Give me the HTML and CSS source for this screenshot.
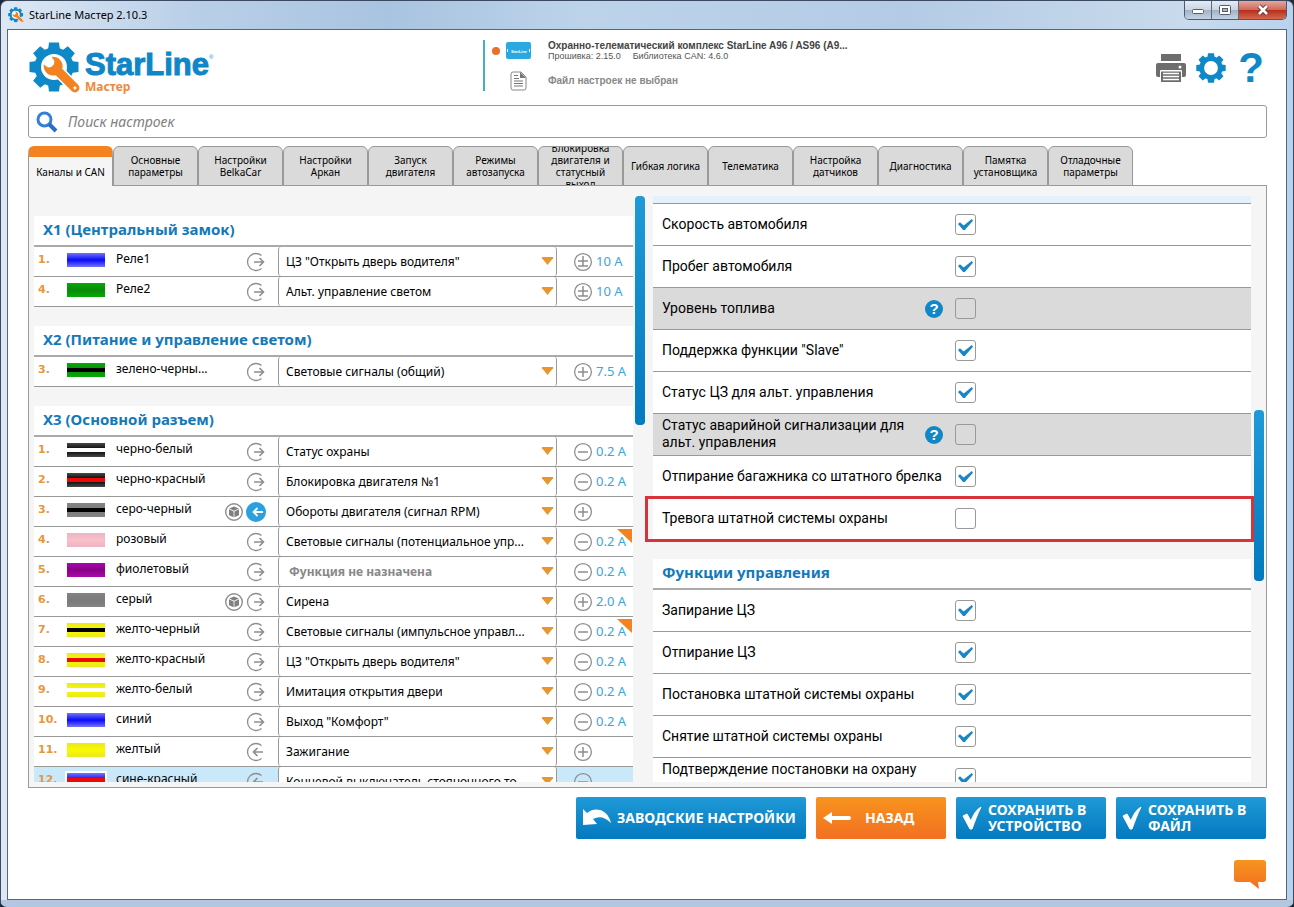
FILE: index.html
```html
<!DOCTYPE html>
<html lang="ru">
<head>
<meta charset="utf-8">
<title>StarLine Мастер 2.10.3</title>
<link rel="stylesheet" href="styles.css">
</head>
<body>
<svg class="defs" aria-hidden="true">
  <defs>
    <linearGradient id="orange" x1="0" y1="0" x2="0" y2="1"><stop offset="0" stop-color="#f7941e"/><stop offset="1" stop-color="#f36f21"/></linearGradient>
  </defs>
  <symbol id="gear" viewBox="-25 -25 50 50">
    <circle r="15.5" fill="none" stroke="#0f88c8" stroke-width="8"/>
    <g fill="#0f88c8">
      <path id="tooth" d="M-6-17-5-24.5H5L6-17z"/>
      <use href="#tooth" transform="rotate(45)"/><use href="#tooth" transform="rotate(90)"/>
      <use href="#tooth" transform="rotate(135)"/><use href="#tooth" transform="rotate(180)"/>
      <use href="#tooth" transform="rotate(225)"/><use href="#tooth" transform="rotate(270)"/>
      <use href="#tooth" transform="rotate(315)"/>
    </g>
  </symbol>
  <symbol id="logo" viewBox="-25 -25 52 52">
    <use href="#gear" x="-25" y="-25" width="50" height="50"/>
    <circle r="13" fill="#fff"/>
    <g transform="translate(-1 -1) rotate(45)">
      <path d="M5-4.5H31a4.500 4.500 0 0 1 0 9H5z" fill="#f58220" stroke="#fff" stroke-width="3"/>
      <path d="M-7.500-5.500A9.500 9.500 0 0 1 8.500-4.500H31a4.500 4.500 0 0 1 0 9H8.500A9.500 9.500 0 0 1-7.500 5.500L-2.500 4.500-.5 2V-2L-2.500-4.500z" fill="#f58220"/>
      <circle cx="31" cy="0" r="1.500" fill="#fff"/>
    </g>
  </symbol>
  <symbol id="out" viewBox="0 0 20 20">
    <path d="M15.500 3.500A8.500 8.500 0 1 0 15.500 16.500" fill="none" stroke="#8e8e8e" stroke-width="1.300"/>
    <path d="M8 10h9M13.500 6l4 4-4 4" fill="none" stroke="#8e8e8e" stroke-width="1.600"/>
  </symbol>
  <symbol id="in" viewBox="0 0 20 20">
    <path d="M15.500 3.500A8.500 8.500 0 1 0 15.500 16.500" fill="none" stroke="#8e8e8e" stroke-width="1.300"/>
    <path d="M17 10H8M11.500 6l-4 4 4 4" fill="none" stroke="#8e8e8e" stroke-width="1.600"/>
  </symbol>
  <symbol id="in-on" viewBox="0 0 20 20">
    <circle cx="10" cy="10" r="10" fill="#2ba0df"/>
    <path d="M17 10H8M11.500 6l-4 4 4 4" fill="none" stroke="#fff" stroke-width="1.800"/>
  </symbol>
  <symbol id="cube" viewBox="0 0 20 20">
    <circle cx="10" cy="10" r="8.300" fill="none" stroke="#8e8e8e" stroke-width="1.400"/>
    <path d="M10 4.500l4.800 2L10 8.700 5.200 6.500zM5 7.300l4.600 2.100v5.900L5 13.200zM15 7.300l-4.600 2.100v5.900l4.600-2.100z" fill="#808080"/>
  </symbol>
  <symbol id="minus" viewBox="0 0 20 20">
    <circle cx="10" cy="10" r="8.400" fill="none" stroke="#8e8e8e" stroke-width="1.300"/>
    <path d="M5 10h10" stroke="#8e8e8e" stroke-width="1.500"/>
  </symbol>
  <symbol id="plus" viewBox="0 0 20 20">
    <circle cx="10" cy="10" r="8.400" fill="none" stroke="#8e8e8e" stroke-width="1.300"/>
    <path d="M5 10h10M10 5v10" stroke="#8e8e8e" stroke-width="1.500"/>
  </symbol>
  <symbol id="plusminus" viewBox="0 0 20 20">
    <circle cx="10" cy="10" r="8.400" fill="none" stroke="#8e8e8e" stroke-width="1.300"/>
    <path d="M5 9h10M10 4v10M5 14h10" stroke="#8e8e8e" stroke-width="1.500"/>
  </symbol>
  <symbol id="tick" viewBox="0 0 20 24">
    <path d="M1 10l4-2 4 7C11 9 14 4 19 1 15 9 13 15 10 23H8z" fill="#fff" stroke="#fff" stroke-linejoin="round"/>
  </symbol>
</svg>

<div class="window">
  <header class="titlebar">
    <svg class="app-icon"><use href="#logo"/></svg>
    <h1 class="title">StarLine Мастер 2.10.3</h1>
    <div class="win-buttons">
      <button class="win-btn" aria-label="Свернуть"><svg width="14" height="10" viewBox="0 0 14 10"><rect x="1.500" y="4.500" width="11" height="4" rx="1" fill="#fff" stroke="#555d6b"/></svg></button>
      <button class="win-btn" aria-label="Развернуть"><svg width="14" height="12" viewBox="0 0 14 12"><rect x="1.500" y="1.500" width="11" height="9" rx="1" fill="#fff" stroke="#555d6b"/><rect x="4.500" y="4.500" width="5" height="3" fill="#a9b8cb" stroke="#555d6b"/></svg></button>
      <button class="win-btn win-close" aria-label="Закрыть"><svg width="14" height="12" viewBox="0 0 14 12"><path d="M3 2l8 8M11 2l-8 8" stroke="#5d3030" stroke-width="4.500"/><path d="M3 2l8 8M11 2l-8 8" stroke="#fff" stroke-width="2.600"/></svg></button>
    </div>
  </header>

  <main class="client">
    <div class="top">
      <div class="brand">
        <svg class="brand-icon"><use href="#logo"/></svg>
        <div class="brand-text">
          <div class="brand-name">StarLine<sup class="brand-reg">®</sup></div>
          <div class="brand-sub">Мастер</div>
        </div>
      </div>
      <div class="device">
        <div class="device-line">
          <svg class="device-icon" viewBox="0 0 44 20"><circle cx="5" cy="10" r="4" fill="#e8702a"/><rect x="15" y="1" width="25" height="17" rx="2" fill="#29a9e0"/><text x="28" y="12" class="device-tag">StarLine</text><path d="M16.500 8v3M38.500 8v3" stroke="#fff"/></svg>
          <div>
            <div class="device-name">Охранно-телематический комплекс StarLine A96 / AS96 (A9...</div>
            <div class="device-info"><span>Прошивка: 2.15.0</span><span>Библиотека CAN: 4.6.0</span></div>
          </div>
        </div>
        <div class="device-line">
          <svg class="device-icon" viewBox="0 0 44 20"><path d="M22 1h8l5 5v11a2 2 0 0 1-2 2H22a2 2 0 0 1-2-2V3a2 2 0 0 1 2-2z" fill="#fff" stroke="#888"/><path d="M29 1l6 6h-6z" fill="#777"/><path d="M23 4.500h4M23 7.500h5M23 10h9M23 12.500h9M23 15h9" stroke="#777"/></svg>
          <div class="file-name">Файл настроек не выбран</div>
        </div>
      </div>
      <div class="tools">
        <button class="tool" aria-label="Печать"><svg width="30" height="30" viewBox="0 0 30 30"><path d="M5 1h20v7H5zM2 10h26a2 2 0 0 1 2 2v10a2 2 0 0 1-2 2h-3v-6H5v6H2a2 2 0 0 1-2-2V12a2 2 0 0 1 2-2z" fill="#6d6d6d"/><circle cx="24" cy="14" r="1.500" fill="#fff"/><path d="M5 18.500h20V29H5z" fill="#6d6d6d"/><path d="M7 20.500h16M7 23.500h16M7 26.500h16" stroke="#fff" stroke-width="1.500"/><path d="M4.500 24v-6.500h21V24" fill="none" stroke="#fff"/></svg></button>
        <button class="tool" aria-label="Настройки"><svg width="30" height="30"><use href="#gear"/></svg></button>
        <button class="tool tool-help" aria-label="Справка">?</button>
      </div>
    </div>

    <label class="search">
      <svg width="22" height="22" viewBox="0 0 22 22"><circle cx="8.500" cy="8.500" r="6.500" fill="none" stroke="#3580d2" stroke-width="3"/><path d="M13 13l7 7" stroke="#2b70c0" stroke-width="4"/></svg>
      <input class="search-input" type="search" placeholder="Поиск настроек" aria-label="Поиск настроек">
    </label>

    <nav class="tabs">
      <button class="tab tab-active">Каналы и CAN</button>
      <button class="tab">Основные параметры</button>
      <button class="tab">Настройки BelkaCar</button>
      <button class="tab">Настройки Аркан</button>
      <button class="tab">Запуск двигателя</button>
      <button class="tab">Режимы автозапуска</button>
      <button class="tab">Блокировка двигателя и статусный выход</button>
      <button class="tab">Гибкая логика</button>
      <button class="tab">Телематика</button>
      <button class="tab">Настройка датчиков</button>
      <button class="tab">Диагностика</button>
      <button class="tab">Памятка установщика</button>
      <button class="tab">Отладочные параметры</button>
    </nav>

    <div class="panel">
      <div class="channels">
        <section class="group">
          <h2 class="group-title">X1 (Центральный замок)</h2>
          <table class="wires">
            <tr><td class="num">1.</td><td class="wire"><i class="sw sw-blue"></i></td><td class="name">Реле1</td><td class="dir"><svg class="ic"><use href="#out"/></svg></td><td class="func"><div class="pick"><select class="pick-box" aria-label="Функция Реле1"><option>ЦЗ "Открыть дверь водителя"</option></select></div></td><td class="amp"><div class="amp-in"><svg class="ic"><use href="#plusminus"/></svg>10 A</div></td></tr>
            <tr><td class="num">4.</td><td class="wire"><i class="sw sw-green"></i></td><td class="name">Реле2</td><td class="dir"><svg class="ic"><use href="#out"/></svg></td><td class="func"><div class="pick"><select class="pick-box" aria-label="Функция Реле2"><option>Альт. управление светом</option></select></div></td><td class="amp"><div class="amp-in"><svg class="ic"><use href="#plusminus"/></svg>10 A</div></td></tr>
          </table>
        </section>
        <section class="group">
          <h2 class="group-title">X2 (Питание и управление светом)</h2>
          <table class="wires">
            <tr><td class="num">3.</td><td class="wire"><i class="sw sw-green line-black"></i></td><td class="name">зелено-черны...</td><td class="dir"><svg class="ic"><use href="#out"/></svg></td><td class="func"><div class="pick"><select class="pick-box" aria-label="Функция зелено-черный"><option>Световые сигналы (общий)</option></select></div></td><td class="amp"><div class="amp-in"><svg class="ic"><use href="#plus"/></svg>7.5 A</div></td></tr>
          </table>
        </section>
        <section class="group">
          <h2 class="group-title">X3 (Основной разъем)</h2>
          <table class="wires">
            <tr><td class="num">1.</td><td class="wire"><i class="sw sw-black line-white"></i></td><td class="name">черно-белый</td><td class="dir"><svg class="ic"><use href="#out"/></svg></td><td class="func"><div class="pick"><select class="pick-box" aria-label="Функция 1"><option>Статус охраны</option></select></div></td><td class="amp"><div class="amp-in"><svg class="ic"><use href="#minus"/></svg>0.2 A</div></td></tr>
            <tr><td class="num">2.</td><td class="wire"><i class="sw sw-black line-red"></i></td><td class="name">черно-красный</td><td class="dir"><svg class="ic"><use href="#out"/></svg></td><td class="func"><div class="pick"><select class="pick-box" aria-label="Функция 2"><option>Блокировка двигателя №1</option></select></div></td><td class="amp"><div class="amp-in"><svg class="ic"><use href="#minus"/></svg>0.2 A</div></td></tr>
            <tr><td class="num">3.</td><td class="wire"><i class="sw sw-gray line-black"></i></td><td class="name">серо-черный</td><td class="dir"><svg class="ic"><use href="#cube"/></svg><svg class="ic"><use href="#in-on"/></svg></td><td class="func"><div class="pick"><select class="pick-box" aria-label="Функция 3"><option>Обороты двигателя (сигнал RPM)</option></select></div></td><td class="amp"><div class="amp-in"><svg class="ic"><use href="#plus"/></svg></div></td></tr>
            <tr><td class="num">4.</td><td class="wire"><i class="sw sw-pink"></i></td><td class="name">розовый</td><td class="dir"><svg class="ic"><use href="#out"/></svg></td><td class="func"><div class="pick"><select class="pick-box" aria-label="Функция 4"><option>Световые сигналы (потенциальное упр...</option></select></div></td><td class="amp flagged"><div class="amp-in"><svg class="ic"><use href="#minus"/></svg>0.2 A</div></td></tr>
            <tr><td class="num">5.</td><td class="wire"><i class="sw sw-violet"></i></td><td class="name">фиолетовый</td><td class="dir"><svg class="ic"><use href="#out"/></svg></td><td class="func"><div class="pick"><select class="pick-box pick-none" aria-label="Функция 5"><option>Функция не назначена</option></select></div></td><td class="amp"><div class="amp-in"><svg class="ic"><use href="#minus"/></svg>0.2 A</div></td></tr>
            <tr><td class="num">6.</td><td class="wire"><i class="sw sw-gray"></i></td><td class="name">серый</td><td class="dir"><svg class="ic"><use href="#cube"/></svg><svg class="ic"><use href="#out"/></svg></td><td class="func"><div class="pick"><select class="pick-box" aria-label="Функция 6"><option>Сирена</option></select></div></td><td class="amp"><div class="amp-in"><svg class="ic"><use href="#plus"/></svg>2.0 A</div></td></tr>
            <tr><td class="num">7.</td><td class="wire"><i class="sw sw-yellow line-black"></i></td><td class="name">желто-черный</td><td class="dir"><svg class="ic"><use href="#out"/></svg></td><td class="func"><div class="pick"><select class="pick-box" aria-label="Функция 7"><option>Световые сигналы (импульсное управл...</option></select></div></td><td class="amp flagged"><div class="amp-in"><svg class="ic"><use href="#minus"/></svg>0.2 A</div></td></tr>
            <tr><td class="num">8.</td><td class="wire"><i class="sw sw-yellow line-red"></i></td><td class="name">желто-красный</td><td class="dir"><svg class="ic"><use href="#out"/></svg></td><td class="func"><div class="pick"><select class="pick-box" aria-label="Функция 8"><option>ЦЗ "Открыть дверь водителя"</option></select></div></td><td class="amp"><div class="amp-in"><svg class="ic"><use href="#minus"/></svg>0.2 A</div></td></tr>
            <tr><td class="num">9.</td><td class="wire"><i class="sw sw-yellow line-white"></i></td><td class="name">желто-белый</td><td class="dir"><svg class="ic"><use href="#out"/></svg></td><td class="func"><div class="pick"><select class="pick-box" aria-label="Функция 9"><option>Имитация открытия двери</option></select></div></td><td class="amp"><div class="amp-in"><svg class="ic"><use href="#minus"/></svg>0.2 A</div></td></tr>
            <tr><td class="num">10.</td><td class="wire"><i class="sw sw-blue"></i></td><td class="name">синий</td><td class="dir"><svg class="ic"><use href="#out"/></svg></td><td class="func"><div class="pick"><select class="pick-box" aria-label="Функция 10"><option>Выход "Комфорт"</option></select></div></td><td class="amp"><div class="amp-in"><svg class="ic"><use href="#minus"/></svg>0.2 A</div></td></tr>
            <tr><td class="num">11.</td><td class="wire"><i class="sw sw-yellow"></i></td><td class="name">желтый</td><td class="dir"><svg class="ic"><use href="#in"/></svg></td><td class="func"><div class="pick"><select class="pick-box" aria-label="Функция 11"><option>Зажигание</option></select></div></td><td class="amp"><div class="amp-in"><svg class="ic"><use href="#plus"/></svg></div></td></tr>
            <tr class="current"><td class="num">12.</td><td class="wire"><i class="sw sw-blue line-red"></i></td><td class="name">сине-красный</td><td class="dir"><svg class="ic"><use href="#in"/></svg></td><td class="func"><div class="pick"><select class="pick-box" aria-label="Функция 12"><option>Концевой выключатель стояночного то...</option></select></div></td><td class="amp"><div class="amp-in"><svg class="ic"><use href="#minus"/></svg></div></td></tr>
          </table>
        </section>
      </div>
      <div class="track"><div class="thumb thumb-left"></div></div>

      <div class="options">
        <div class="options-strip"></div>
        <label class="option"><span class="option-text">Скорость автомобиля</span><input class="check" type="checkbox" checked></label>
        <label class="option"><span class="option-text">Пробег автомобиля</span><input class="check" type="checkbox" checked></label>
        <label class="option option-off"><span class="option-text">Уровень топлива</span><span class="hint">?</span><input class="check" type="checkbox"></label>
        <label class="option"><span class="option-text">Поддержка функции "Slave"</span><input class="check" type="checkbox" checked></label>
        <label class="option"><span class="option-text">Статус ЦЗ для альт. управления</span><input class="check" type="checkbox" checked></label>
        <label class="option option-off"><span class="option-text">Статус аварийной сигнализации для альт. управления</span><span class="hint">?</span><input class="check" type="checkbox"></label>
        <label class="option"><span class="option-text">Отпирание багажника со штатного брелка</span><input class="check" type="checkbox" checked></label>
        <label class="option option-marked"><span class="option-text">Тревога штатной системы охраны</span><input class="check" type="checkbox"></label>
        <h2 class="group-title options-title">Функции управления</h2>
        <label class="option"><span class="option-text">Запирание ЦЗ</span><input class="check" type="checkbox" checked></label>
        <label class="option"><span class="option-text">Отпирание ЦЗ</span><input class="check" type="checkbox" checked></label>
        <label class="option"><span class="option-text">Постановка штатной системы охраны</span><input class="check" type="checkbox" checked></label>
        <label class="option"><span class="option-text">Снятие штатной системы охраны</span><input class="check" type="checkbox" checked></label>
        <label class="option"><span class="option-text">Подтверждение постановки на охрану<br>&nbsp;</span><input class="check" type="checkbox" checked></label>
      </div>
      <div class="track"><div class="thumb thumb-right"></div></div>
    </div>

    <div class="actions">
      <button class="action action-reset"><svg width="30" height="30" viewBox="0 0 30 30"><path d="M1 6l4 4C14 3 26 7 29 20 23 14 17 13 11 16l4 5L1 22z" fill="#fff"/></svg><span>ЗАВОДСКИЕ НАСТРОЙКИ</span></button>
      <button class="action action-back"><svg width="30" height="30" viewBox="0 0 30 30"><path d="M1 15l9-6v4h17a2 2 0 0 1 0 4H10v4z" fill="#fff"/></svg><span>НАЗАД</span></button>
      <button class="action action-save"><svg width="20" height="24"><use href="#tick"/></svg><span>СОХРАНИТЬ В УСТРОЙСТВО</span></button>
      <button class="action action-save"><svg width="20" height="24"><use href="#tick"/></svg><span>СОХРАНИТЬ В ФАЙЛ</span></button>
    </div>
    <div class="chat-row">
      <button class="chat" aria-label="Сообщение"><svg width="32" height="30" viewBox="0 0 32 30"><path d="M3 0h26a3 3 0 0 1 3 3v16a3 3 0 0 1-3 3h-5l1 7-9-7H3a3 3 0 0 1-3-3V3a3 3 0 0 1 3-3z" fill="url(#orange)"/></svg></button>
    </div>
  </main>
</div>
</body>
</html>
```
FILE: styles.css
```css
* { box-sizing: border-box; }

body {
  margin: 0;
  background: #1d2a3c;
  font: 12px/17px "Noto Sans", sans-serif;
  color: #000;
}

button, select, input { font: inherit; color: inherit; margin: 0; }
button { border: 0; padding: 0; background: none; }
svg { display: block; flex: none; }
.defs { position: absolute; width: 0; height: 0; }

/* Window frame */
.window {
  display: flex;
  flex-direction: column;
  height: 100vh;
  padding: 0 6px;
  border: 1px solid #3b4a60;
  border-bottom-width: 7px;
  border-bottom-color: #b3c8e0;
  border-radius: 7px;
  background: linear-gradient(90deg, #dde8f4, #b9cfe8 15%, #a9c4e0 30%, #bcd3ea 45%, #b3cbe5 70%, #c9daec 92%, #b9d2ec);
}
.titlebar { display: flex; align-items: center; flex: none; height: 28px; }
.app-icon { width: 16px; height: 16px; margin-left: 1px; }
.title { flex: 1; margin: 0 0 0 5px; font: 11px/16px "Noto Sans", sans-serif; }
.win-buttons {
  display: flex;
  align-self: flex-start;
  height: 19px;
  border: 1px solid #4c5a6d;
  border-top: 0;
  border-radius: 0 0 5px 5px;
  overflow: hidden;
}
.win-btn {
  display: grid;
  place-items: center;
  width: 27px;
  border-right: 1px solid #5c6a7d;
  background: linear-gradient(#e4ebf3, #cbd6e3 48%, #a3b2c6 52%, #c3d3e4);
}
.win-close { width: 47px; border-right: 0; background: linear-gradient(#e6a79d, #d0695b 48%, #b8301c 52%, #d4674f); }

.client {
  display: flex;
  flex-direction: column;
  flex: 1;
  min-height: 0;
  padding: 0 19px 9px 20px;
  border: 1px solid #55677f;
  background: #fff;
}

/* Header */
.top { display: flex; flex: none; height: 75px; }
.brand { display: flex; flex: none; width: 455px; padding: 12px 0 0 1px; }
.brand-icon { width: 52px; height: 52px; }
.brand-text { padding: 8px 0 0 4px; }
.brand-name {
  font: bold 31px/30px "Liberation Sans", sans-serif;
  color: #0f86c6;
  -webkit-text-stroke: 1px #0f86c6;
}
.brand-reg { font: 6px/6px "Liberation Sans", sans-serif; vertical-align: 16px; -webkit-text-stroke: 0; }
.brand-sub { font: bold 12px/13px "Noto Sans", sans-serif; color: #f0883a; }
.device {
  display: flex;
  flex-direction: column;
  gap: 9px;
  align-self: flex-start;
  min-width: 0;
  margin-top: 10px;
  padding: 0 0 0 6px;
  border-left: 2px solid #46aec9;
  font-family: "Liberation Sans", sans-serif;
}
.device-line { display: flex; align-items: center; gap: 13px; }
.device-icon { width: 44px; height: 20px; }
.device-tag { font: bold 4px "Liberation Sans", sans-serif; fill: #fff; text-anchor: middle; }
.device-name { font-size: 10px; font-weight: bold; line-height: 11px; color: #444; white-space: nowrap; }
.device-info { display: flex; gap: 12px; font-size: 9px; line-height: 11px; color: #555; }
.file-name { font-size: 10px; font-weight: bold; line-height: 20px; color: #888; }
.tools { display: flex; align-items: center; gap: 10px; margin-left: auto; padding: 1px 1px 0 0; }
.tool { width: 30px; height: 30px; }
.tool-help { font: bold 42px/30px "Liberation Sans", sans-serif; color: #0f88c8; }

.search {
  display: flex;
  align-items: center;
  gap: 10px;
  flex: none;
  height: 33px;
  padding: 0 7px;
  border: 1px solid #999;
  border-radius: 3px;
}
.search-input { flex: 1; border: 0; outline: 0; padding: 0; background: none; font: italic 14px/20px "Noto Sans", sans-serif; }
.search-input::placeholder { color: #808080; }

/* Tabs */
.tabs { position: relative; display: flex; flex: none; margin-top: 8px; height: 40px; }
.tab {
  display: flex;
  align-items: center;
  justify-content: center;
  flex: 0 1 85px;
  min-width: 0;
  height: 40px;
  padding: 0 3px;
  overflow: hidden;
  border: 1px solid #999;
  border-radius: 6px 6px 0 0;
  background: #dadada;
  font: 10px/12px "Noto Sans", sans-serif;
}
.tab-active { border-top: 11px solid #f58220; border-bottom: 0; background: #f5f5f5; }

/* Content panel */
.panel {
  display: flex;
  flex: 1;
  min-height: 0;
  margin-top: -1px;
  padding: 10px 2px 5px 5px;
  border: 1px solid #999;
  background: #f5f5f5;
  overflow: hidden;
}
.channels { flex: 1 1 599px; min-width: 0; padding-top: 20px; overflow: hidden; }
.group { margin-bottom: 19px; }
.group-title {
  height: 31px;
  margin: 0;
  padding: 0 9px;
  border-bottom: 2px solid #aaa;
  background: #fff;
  font: bold 15px/27px "Noto Sans", sans-serif;
  color: #1379b8;
}
.wires { width: 100%; table-layout: fixed; border-collapse: separate; border-spacing: 0; }
.wires td { height: 30px; padding: 0; border-bottom: 1px solid #999; background: #fff; vertical-align: middle; }
.wires .num { width: 33px; padding: 0 0 4px 4px; font: bold 11px/17px "DejaVu Sans", sans-serif; color: #e8963a; }
.wires .wire { width: 49px; padding-bottom: 3px; }
.wires .name { padding-bottom: 6px; white-space: nowrap; }
.wires .dir { width: 58px; padding-right: 12px; text-align: right; white-space: nowrap; }
.wires .func { width: 279px; }
.wires .amp { position: relative; width: 76px; }
.wires .current td { background: #c9e9fb; }
.ic { width: 20px; height: 20px; }
.dir .ic { display: inline-block; vertical-align: middle; margin-left: 2px; }
.amp-in { display: flex; align-items: center; gap: 3px; padding-left: 16px; font-size: 13px; color: #3ea5d8; }
.flagged::after {
  content: "";
  position: absolute;
  top: 2px;
  right: 1px;
  width: 15px;
  height: 14px;
  background: #f58220;
  clip-path: polygon(0 0, 100% 0, 100% 100%);
}

.pick { position: relative; }
.pick::after {
  content: "";
  position: absolute;
  top: 10px;
  right: 4px;
  width: 11px;
  height: 8px;
  background: #e8962e;
  clip-path: polygon(0 0, 100% 0, 100% 15%, 50% 100%, 0 15%);
  pointer-events: none;
}
.pick-box {
  display: block;
  width: 100%;
  height: 29px;
  padding: 0 20px 0 7px;
  appearance: none;
  border: 1px solid #999;
  border-width: 0 1px;
  border-radius: 3px;
  background: #fff;
}
.pick-none { padding-left: 10px; font-weight: bold; color: #888; }

/* Wire colour samples */
.sw { display: block; width: 38px; height: 14px; background: linear-gradient(var(--edge), var(--mid), var(--edge)); }
.sw-blue { --edge: #7575f5; --mid: #0808fa; }
.sw-green { --edge: #08a808; --mid: #088c08; }
.sw-black { --edge: #484848; --mid: #000; }
.sw-gray { --edge: #848484; --mid: #7a7a7a; }
.sw-pink { --edge: #eab4c0; --mid: #fabfca; }
.sw-violet { --edge: #aa08aa; --mid: #880088; }
.sw-yellow { --edge: #e8e820; --mid: #fafa00; }
.line-black, .line-red, .line-white { display: grid; align-items: center; }
.line-black::after, .line-red::after, .line-white::after { content: ""; height: 4px; background: var(--line); }
.line-black { --line: #000; }
.line-red { --line: #ee0808; }
.line-white { --line: #fff; }
.current .sw { outline: 2px solid #fff; }

/* Scroll bars */
.track { flex: none; width: 10px; }
.thumb { width: 10px; border-radius: 4px; background: linear-gradient(#1f9ad7, #0379bf); }
.thumb-left { height: 229px; }
.thumb-right { height: 171px; margin-top: 214px; }
.channels + .track { margin-left: 2px; }

/* Options list */
.options { flex: 1 1 609px; min-width: 0; padding: 0 3px 0 8px; overflow: hidden; }
.options-strip { height: 8px; border-bottom: 1px solid #999; background: #e4f1fa; }
.option {
  position: relative;
  display: grid;
  grid-template-columns: 254px 21px 21px;
  column-gap: 9px;
  align-items: center;
  height: 42px;
  padding-left: 9px;
  border-bottom: 1px solid #999;
  background: #fff;
  font: 14px/17px Roboto, "Noto Sans", sans-serif;
}
.option-text { grid-row: 1; grid-column: 1 / 3; padding-bottom: 1px; white-space: nowrap; }
.option-off { background: #dadada; }
.option-off .option-text { grid-column: 1; white-space: normal; }
.option-marked::after { content: ""; position: absolute; inset: -2px -3px -3px -8px; border: 3px solid #d8323a; }
.hint {
  grid-row: 1;
  grid-column: 2;
  width: 18px;
  border-radius: 9px;
  background: #1187c8;
  font: bold 15px/18px "Liberation Sans", sans-serif;
  color: #fff;
  text-align: center;
}
.check {
  grid-row: 1;
  grid-column: 3;
  display: grid;
  place-items: center;
  width: 21px;
  height: 21px;
  appearance: none;
  border: 1px solid #999;
  border-radius: 3px;
}
.check:checked::before {
  content: "";
  width: 15px;
  height: 11px;
  background: #1a87c4;
  clip-path: polygon(0 45%, 13% 30%, 38% 58%, 92% 0, 100% 15%, 45% 100%, 34% 100%);
}
.options-title { margin-top: 19px; }

/* Bottom buttons */
.actions { display: flex; flex: none; justify-content: flex-end; gap: 10px; margin-top: 9px; padding-right: 1px; }
.action {
  display: flex;
  align-items: center;
  height: 42px;
  padding-left: 6px;
  border-radius: 2px;
  background: linear-gradient(#1f9ad7, #0379bf);
  font: bold 14px/16px "Noto Sans", sans-serif;
  color: #fff;
  text-align: left;
}
.action-reset { width: 230px; gap: 5px; }
.action-back { width: 130px; gap: 13px; background: linear-gradient(#f7941e, #f36f21); }
.action-save { width: 150px; gap: 6px; }
.chat-row { display: flex; flex: none; justify-content: flex-end; margin-top: 21px; padding-right: 1px; }
.chat { height: 30px; }
```
